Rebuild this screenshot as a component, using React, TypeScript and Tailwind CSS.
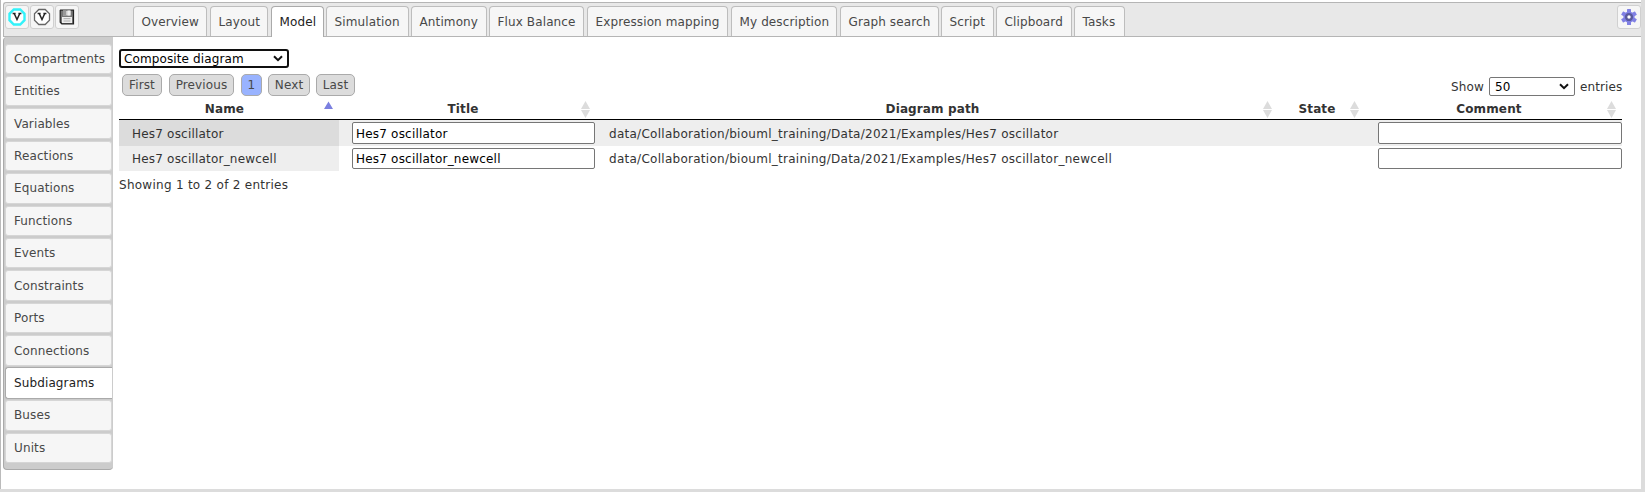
import React from "react";

const tabs: { label: string; cls: string }[] = [
  { label: "Overview", cls: "w-[74px]" },
  { label: "Layout", cls: "w-[58px] ml-[3px]" },
  { label: "Model", cls: "w-[53px] ml-[3px]" },
  { label: "Simulation", cls: "w-[83px] ml-[2px]" },
  { label: "Antimony", cls: "w-[76px] ml-[2px]" },
  { label: "Flux Balance", cls: "w-[95px] ml-[2px]" },
  { label: "Expression mapping", cls: "w-[141px] ml-[3px]" },
  { label: "My description", cls: "w-[106px] ml-[3px]" },
  { label: "Graph search", cls: "w-[99px] ml-[3px]" },
  { label: "Script", cls: "w-[53px] ml-[2px]" },
  { label: "Clipboard", cls: "w-[76px] ml-[2px]" },
  { label: "Tasks", cls: "w-[51px] ml-[2px]" },
];

const sections = [
  "Compartments", "Entities", "Variables", "Reactions", "Equations", "Functions", "Events",
  "Constraints", "Ports", "Connections", "Subdiagrams", "Buses", "Units",
];

const pages: { label: string; cls: string }[] = [
  { label: "First", cls: "w-[40px] bg-[#dcdcdc]" },
  { label: "Previous", cls: "w-[65px] ml-[7px] bg-[#dcdcdc]" },
  { label: "1", cls: "w-[21px] ml-[7px] bg-[#99b3ff]" },
  { label: "Next", cls: "w-[42px] ml-[6px] bg-[#dcdcdc]" },
  { label: "Last", cls: "w-[39px] ml-[6px] bg-[#dcdcdc]" },
];

const rows = [
  { name: "Hes7 oscillator", path: "data/Collaboration/biouml_training/Data/2021/Examples/Hes7 oscillator" },
  { name: "Hes7 oscillator_newcell", path: "data/Collaboration/biouml_training/Data/2021/Examples/Hes7 oscillator_newcell" },
];

const columns = ["Name", "Title", "Diagram path", "State", "Comment"];

function IconButton({ children }: { children: React.ReactNode }) {
  return (
    <button className="flex h-6 w-[24px] shrink-0 items-center justify-center rounded-[3px] border border-[#d0d0d0] bg-[#f6f6f6]">
      {children}
    </button>
  );
}

function VIcon({ ring, width }: { ring: string; width: number }) {
  return (
    <svg width="18" height="18" viewBox="0 0 18 18" className="shrink-0">
      <path d="M5.8 1.5h6.4l4.3 4.3v6.4l-4.3 4.3H5.8l-4.3-4.3V5.8z" fill="#fff" stroke={ring} strokeWidth={width} />
      <path d="M4.6 5.5h3M10.4 5.5h3M6.2 5.5l2.8 6 2.8-6" fill="none" stroke="#222" strokeWidth="1.5" />
    </svg>
  );
}

function SaveIcon() {
  return (
    <svg width="16" height="16" viewBox="0 0 16 16" className="shrink-0">
      <path d="M1.5 1.2h13v13.6H2.8L1.2 13.3V1.5z" fill="#777" stroke="#222" strokeWidth="1.2" />
      <path d="M4 1.5h8v5H4z" fill="#ccc" />
      <path d="M4 1.5h3v5H4z" fill="#999" />
      <path d="M8.5 1.5h2.5v5H8.5z" fill="#eee" />
      <path d="M3 8h10v6H3z" fill="#eee" />
      <path d="M4.5 9.7h7M4.5 12h7" stroke="#aaa" />
    </svg>
  );
}

function GearIcon() {
  return (
    <svg width="16" height="16" viewBox="0 0 16 16" className="shrink-0">
      <g fill="#8080e4">
        <circle cx="8" cy="8" r="5.6" />
        <rect x="6" y="0" width="4" height="16" rx="0.5" />
        <rect x="6" y="0" width="4" height="16" rx="0.5" transform="rotate(60 8 8)" />
        <rect x="6" y="0" width="4" height="16" rx="0.5" transform="rotate(120 8 8)" />
      </g>
      <circle cx="8" cy="8" r="2.9" fill="#fff" stroke="#5a5a9c" strokeWidth="2.4" />
    </svg>
  );
}

function Chevron() {
  return (
    <svg width="10" height="7" viewBox="0 0 10 7">
      <path d="M1 1.2l4 4 4-4" fill="none" stroke="#111" strokeWidth="2" />
    </svg>
  );
}

function SortIcon({ active }: { active: boolean }) {
  return (
    <svg width="9" height="17" viewBox="0 0 9 17" className="shrink-0">
      {active ? <path d="M0 8l4.5-7.5L9 8z" fill="#7b80e0" /> : <path d="M0 8l4.5-8L9 8zM0 9h9l-4.5 8z" fill="#dcdcdc" />}
    </svg>
  );
}

export default function App() {
  return (
    <div className="flex h-[492px] w-[1645px] overflow-hidden border-b-[3px] border-[#dcdcdc] bg-[#dcdcdc] font-['DejaVu_Sans',sans-serif] text-[12px] leading-[16px] tracking-[0.12px] text-[#333]">
      <div className="flex w-[1641px] flex-col border-l border-[#bbb] bg-white pl-[2px] pt-[2px]">
        <header className="flex h-[35px] shrink-0 rounded-tl-[3px] border-y border-l border-[#b5b5b5] bg-[#e8e8e8]">
          <div className="flex w-[129px] shrink-0 gap-px pl-px pt-[2px]">
            <IconButton><VIcon ring="#33f2fa" width={2.4} /></IconButton>
            <IconButton><VIcon ring="#666" width={1.3} /></IconButton>
            <IconButton><SaveIcon /></IconButton>
          </div>
          <nav className="flex flex-1 pt-[3px]">
            {tabs.map((t) => (
              <button
                key={t.label}
                className={`${t.cls} shrink-0 whitespace-nowrap rounded-t-[4px] border border-b-0 pl-[7.5px] text-left ${
                  t.label === "Model" ? "-mb-px border-[#aaa] bg-white pb-px text-[#222]" : "border-[#bdbdbd] bg-[#f6f6f6] text-[#484848]"
                }`}
              >
                {t.label}
              </button>
            ))}
          </nav>
          <div className="pt-[2px]">
            <IconButton><GearIcon /></IconButton>
          </div>
        </header>
        <div className="flex flex-1">
          <aside className="flex h-[433px] w-[110px] shrink-0 flex-col rounded-b-[4px] rounded-tl-[4px] border-b border-l border-[#aaa] bg-[#ccc] pb-[5px] pl-px pt-[5.5px]">
            {sections.map((s) =>
              s === "Subdiagrams" ? (
                <button key={s} className="mr-px flex flex-1 items-center rounded-l-[3px] border border-r-0 border-[#aaa] bg-white pl-[8px] text-[#222]">{s}</button>
              ) : (
                <div key={s} className="flex-1 py-px pr-px">
                  <button className="flex h-full w-full items-center rounded-[3px] border border-[#d6d6d6] bg-[#f6f6f6] pl-[8px] text-[#484848]">{s}</button>
                </div>
              )
            )}
          </aside>
          <main className="flex w-[1509px] flex-col pl-[6px] pt-[12px]">
            <button className="flex h-[19px] w-[170px] items-center justify-between rounded-[3px] border-2 border-[#101010] bg-white pl-[3px] pr-[4px] text-black">
              Composite diagram
              <Chevron />
            </button>
            <div className="flex h-[34px] justify-between">
              <div className="flex pl-[3px] pt-[6px]">
                {pages.map((p) => (
                  <button key={p.label} className={`${p.cls} flex h-[22px] items-center justify-center rounded-[5px] border border-[#aaa] text-[#484848]`}>
                    {p.label}
                  </button>
                ))}
              </div>
              <div className="mt-[9px] flex h-[19px] w-[171px] shrink-0 items-center self-start">
                <span className="w-[38px]">Show</span>
                <span className="mr-[5px] flex h-[19px] w-[86px] items-center justify-between rounded-[2px] border border-[#767676] bg-white pl-[5px] pr-[5px] text-black">
                  50
                  <Chevron />
                </span>
                <span className="w-[42px]">entries</span>
              </div>
            </div>
            <div className="grid h-[18px] w-[1503px] shrink-0 grid-cols-[220px_257px_682px_87px_257px] border-b border-black">
              {columns.map((c, i) => (
                <div key={c} className="-mt-[3px] flex items-center pr-[6px]">
                  <span className="flex-1 pl-[6px] text-center font-bold">{c}</span>
                  <SortIcon active={i === 0} />
                </div>
              ))}
            </div>
            {rows.map((r, i) => (
              <div
                key={r.name}
                className={`grid w-[1503px] shrink-0 grid-cols-[220px_257px_682px_87px_257px] items-center tracking-[0.2px] ${i === 0 ? "h-[26px] bg-[#eee]" : "h-[25px] bg-white"}`}
              >
                <div className={`flex h-full items-center pl-[13px] ${i === 0 ? "bg-[#dcdcdc] pt-[2px]" : "bg-[#eee]"}`}>{r.name}</div>
                <div className="pl-[13px]">
                  <input defaultValue={r.name} className={`block w-[243px] rounded-[2px] border border-[#767676] bg-white px-[3px] tracking-[0.2px] text-black ${i === 0 ? "h-[22px] pt-px" : "h-[21px]"}`} />
                </div>
                <div className={`pl-[13px] tracking-[0.27px] ${i === 0 ? "pt-[2px]" : ""}`}>{r.path}</div>
                <div />
                <div className="pl-[13px]">
                  <input className={`block w-[244px] rounded-[2px] border border-[#767676] bg-white ${i === 0 ? "h-[22px]" : "h-[21px]"}`} />
                </div>
              </div>
            ))}
            <div className="pt-[6px] tracking-[0.27px]">Showing 1 to 2 of 2 entries</div>
          </main>
        </div>
      </div>
    </div>
  );
}
